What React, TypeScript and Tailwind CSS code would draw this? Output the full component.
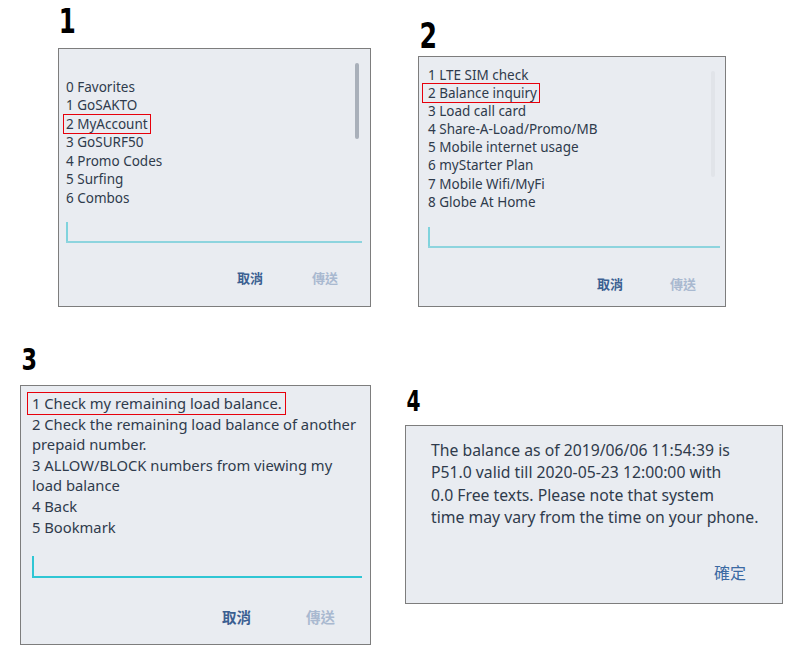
const textFont = { fontFamily: '"Noto Sans", "Noto Sans CJK TC", sans-serif' };

type Line = { text: string; mark?: boolean };

// red highlight drawn over the chosen menu item
const Mark = ({ children, box }: { children: React.ReactNode; box: string }) => (
    <span className="relative inline-block">
        <span className={`absolute border-[1.5px] border-solid border-red-600 ${box}`} />
        {children}
    </span>
);

const Label = ({ n, cls }: { n: string; cls: string }) => (
    <div
        className={`font-bold text-black ${cls}`}
        style={{ fontFamily: '"Liberation Sans Narrow", "DejaVu Sans Condensed", sans-serif' }}
    >
        {n}
    </div>
);

const App = () => {
    const menu1: Line[] = [
        { text: "0 Favorites" },
        { text: "1 GoSAKTO" },
        { text: "2 MyAccount", mark: true },
        { text: "3 GoSURF50" },
        { text: "4 Promo Codes" },
        { text: "5 Surfing" },
        { text: "6 Combos" },
    ];
    const menu2: Line[] = [
        { text: "1 LTE SIM check" },
        { text: "2 Balance inquiry", mark: true },
        { text: "3 Load call card" },
        { text: "4 Share-A-Load/Promo/MB" },
        { text: "5 Mobile internet usage" },
        { text: "6 myStarter Plan" },
        { text: "7 Mobile Wifi/MyFi" },
        { text: "8 Globe At Home" },
    ];
    const menu3: Line[] = [
        { text: "1 Check my remaining load balance.", mark: true },
        { text: "2 Check the remaining load balance of another" },
        { text: "prepaid number." },
        { text: "3 ALLOW/BLOCK numbers from viewing my" },
        { text: "load balance" },
        { text: "4 Back" },
        { text: "5 Bookmark" },
    ];

    return (
        <div className="w-[800px] h-[654px] bg-white overflow-hidden" style={textFont}>
            {/* top row */}
            <div className="flex items-start h-[307px]">
                <div className="ml-[58px] w-[313px]">
                    <Label n="1" cls="h-[48px] pt-[4px] text-[34px] leading-[34px] pl-[1px] scale-x-[0.8] origin-left" />
                    <div className="relative h-[259px] flex flex-col bg-[#e9ecf1] border border-[#7d7d7d] pl-[7px] pr-[8px] pt-[29px]">
                        <div className="absolute right-[11px] top-[14px] w-[4px] h-[76px] rounded-full bg-[#a9b0ba]" />
                        <div className="text-[13.5px] leading-[18.43px] text-[#2f3b4c]">
                            {menu1.map((l) =>
                                <div key={l.text} className="whitespace-nowrap">
                                    {l.mark ? <Mark box="-left-[3px] -right-[3px] -top-[1px] -bottom-[1px]">{l.text}</Mark> : l.text}
                                </div>
                            )}
                        </div>
                        <div className="mt-[15px] w-[2px] h-[19px] bg-[#7fd3dd]" />
                        <div className="h-[2px] bg-[#8dd4de]" />
                        <div className="mt-[25px] flex justify-end gap-[49px] pr-[24px] text-[13px] leading-[20px] font-bold">
                            <span className="text-[#3b5f92]">取消</span>
                            <span className="text-[#a9b9d0]">傳送</span>
                        </div>
                    </div>
                </div>

                <div className="ml-[47px] w-[308px]">
                    <Label n="2" cls="h-[56px] pt-[19px] text-[35px] leading-[35px] pl-[2px] scale-x-[0.8] origin-left" />
                    <div className="relative h-[251px] flex flex-col bg-[#e9ecf1] border border-[#7d7d7d] pl-[9px] pr-[5px] pt-[9px]">
                        <div className="absolute right-[10px] top-[14px] w-[4px] h-[106px] rounded-full bg-[#e1e4e9]" />
                        <div className="text-[13.5px] leading-[18.1px] text-[#2f3b4c]">
                            {menu2.map((l) =>
                                <div key={l.text} className="whitespace-nowrap">
                                    {l.mark ? <Mark box="-left-[6px] -right-[3px] -top-[1px] -bottom-[1px]">{l.text}</Mark> : l.text}
                                </div>
                            )}
                        </div>
                        <div className="mt-[16px] w-[2px] h-[19px] bg-[#7fd3dd]" />
                        <div className="h-[2px] bg-[#8dd4de]" />
                        <div className="mt-[26px] flex justify-end gap-[47px] pr-[24px] text-[13px] leading-[20px] font-bold">
                            <span className="text-[#3b5f92]">取消</span>
                            <span className="text-[#a9b9d0]">傳送</span>
                        </div>
                    </div>
                </div>
            </div>

            {/* bottom row */}
            <div className="flex items-start">
                <div className="ml-[20px] w-[351px]">
                    <Label n="3" cls="h-[78px] pt-[37px] text-[31px] leading-[31px] pl-[2px] scale-x-[0.8] origin-left" />
                    <div className="relative h-[260px] flex flex-col bg-[#e9ecf1] border border-[#7d7d7d] pl-[11px] pr-[8px] pt-[7px]">
                        <div className="text-[14.75px] leading-[20.6px] text-[#2f3b4c]">
                            {menu3.map((l) =>
                                <div key={l.text} className="whitespace-nowrap">
                                    {l.mark ? <Mark box="-left-[5px] -right-[4px] -top-[1px] -bottom-[1px]">{l.text}</Mark> : l.text}
                                </div>
                            )}
                        </div>
                        <div className="mt-[19px] w-[2px] h-[20px] bg-[#2fc6d4]" />
                        <div className="h-[2px] bg-[#2fc6d4]" />
                        <div className="mt-[29px] flex justify-end gap-[55px] pr-[27px] text-[14.5px] leading-[20px] font-bold">
                            <span className="text-[#3b5f92]">取消</span>
                            <span className="text-[#a9b9d0]">傳送</span>
                        </div>
                    </div>
                </div>

                <div className="ml-[34px] w-[378px]">
                    <Label n="4" cls="h-[118px] pt-[81px] text-[28px] leading-[28px] pl-[2px] scale-x-[0.8] origin-left" />
                    <div className="h-[179px] flex flex-col bg-[#e9ecf1] border border-[#7d7d7d] pl-[25px] pr-[10px] pt-[13px]">
                        <div className="text-[15.75px] leading-[22.4px] text-[#2f3b4c]">
                            <div className="whitespace-nowrap">The balance as of 2019/06/06 11:54:39 is</div>
                            <div className="whitespace-nowrap">P51.0 valid till 2020-05-23 12:00:00 with</div>
                            <div className="whitespace-nowrap">0.0 Free texts. Please note that system</div>
                            <div className="whitespace-nowrap">time may vary from the time on your phone.</div>
                        </div>
                        <div className="mt-[33px] flex justify-end pr-[26px] text-[16px] leading-[22px] text-[#3b6aa3]">
                            <span>確定</span>
                        </div>
                    </div>
                </div>
            </div>
        </div>
    );
};

export default App;
